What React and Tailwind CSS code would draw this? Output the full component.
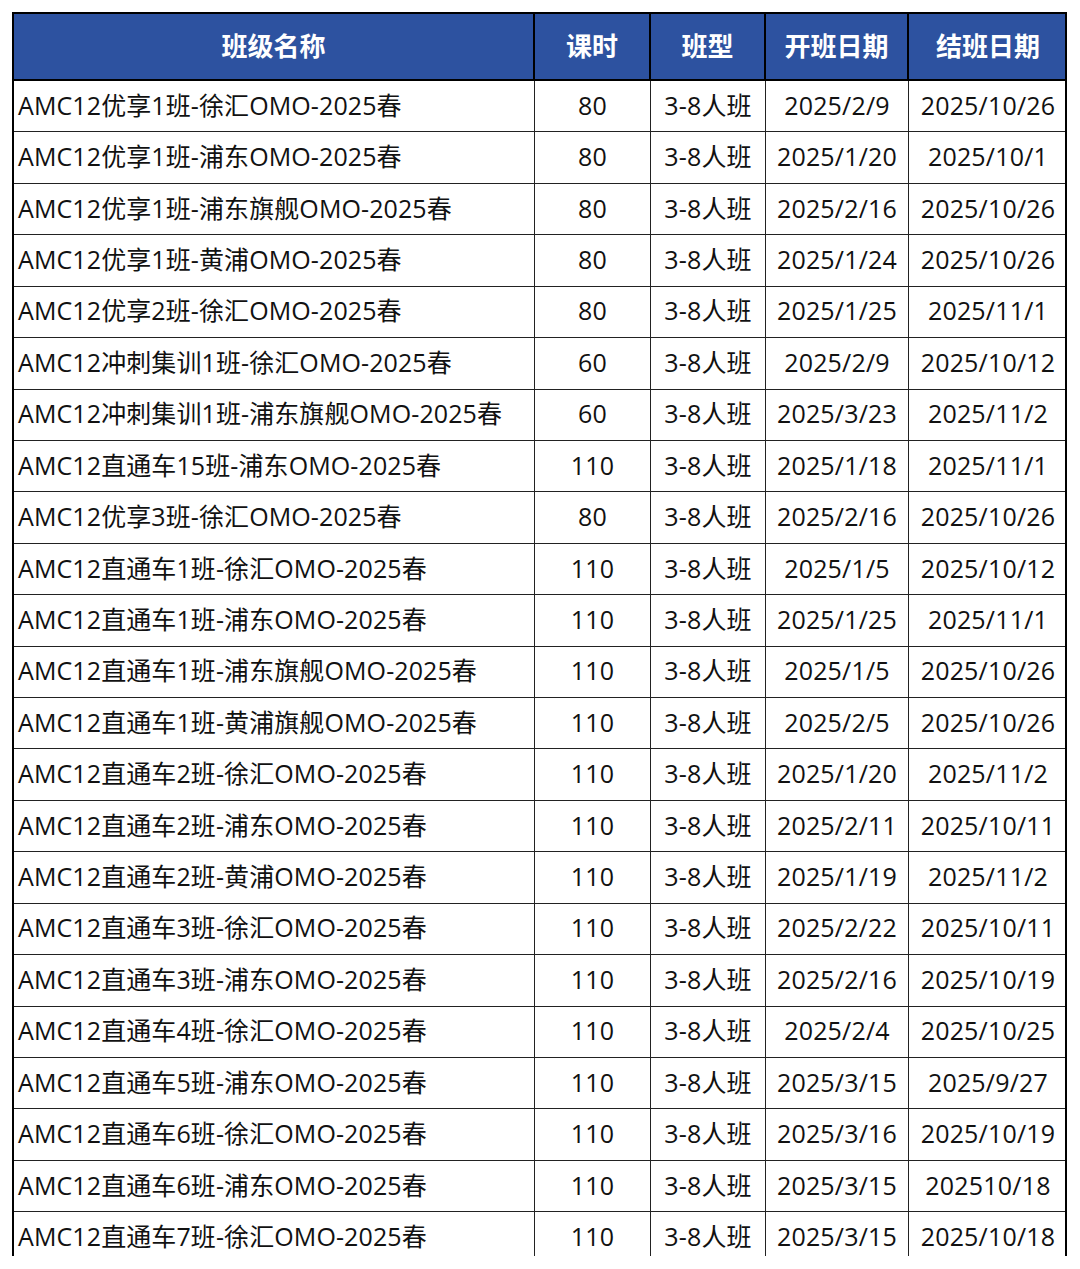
import React from "react";

const rows = [
  ["AMC12优享1班-徐汇OMO-2025春", "80", "3-8人班", "2025/2/9", "2025/10/26"],
  ["AMC12优享1班-浦东OMO-2025春", "80", "3-8人班", "2025/1/20", "2025/10/1"],
  ["AMC12优享1班-浦东旗舰OMO-2025春", "80", "3-8人班", "2025/2/16", "2025/10/26"],
  ["AMC12优享1班-黄浦OMO-2025春", "80", "3-8人班", "2025/1/24", "2025/10/26"],
  ["AMC12优享2班-徐汇OMO-2025春", "80", "3-8人班", "2025/1/25", "2025/11/1"],
  ["AMC12冲刺集训1班-徐汇OMO-2025春", "60", "3-8人班", "2025/2/9", "2025/10/12"],
  ["AMC12冲刺集训1班-浦东旗舰OMO-2025春", "60", "3-8人班", "2025/3/23", "2025/11/2"],
  ["AMC12直通车15班-浦东OMO-2025春", "110", "3-8人班", "2025/1/18", "2025/11/1"],
  ["AMC12优享3班-徐汇OMO-2025春", "80", "3-8人班", "2025/2/16", "2025/10/26"],
  ["AMC12直通车1班-徐汇OMO-2025春", "110", "3-8人班", "2025/1/5", "2025/10/12"],
  ["AMC12直通车1班-浦东OMO-2025春", "110", "3-8人班", "2025/1/25", "2025/11/1"],
  ["AMC12直通车1班-浦东旗舰OMO-2025春", "110", "3-8人班", "2025/1/5", "2025/10/26"],
  ["AMC12直通车1班-黄浦旗舰OMO-2025春", "110", "3-8人班", "2025/2/5", "2025/10/26"],
  ["AMC12直通车2班-徐汇OMO-2025春", "110", "3-8人班", "2025/1/20", "2025/11/2"],
  ["AMC12直通车2班-浦东OMO-2025春", "110", "3-8人班", "2025/2/11", "2025/10/11"],
  ["AMC12直通车2班-黄浦OMO-2025春", "110", "3-8人班", "2025/1/19", "2025/11/2"],
  ["AMC12直通车3班-徐汇OMO-2025春", "110", "3-8人班", "2025/2/22", "2025/10/11"],
  ["AMC12直通车3班-浦东OMO-2025春", "110", "3-8人班", "2025/2/16", "2025/10/19"],
  ["AMC12直通车4班-徐汇OMO-2025春", "110", "3-8人班", "2025/2/4", "2025/10/25"],
  ["AMC12直通车5班-浦东OMO-2025春", "110", "3-8人班", "2025/3/15", "2025/9/27"],
  ["AMC12直通车6班-徐汇OMO-2025春", "110", "3-8人班", "2025/3/16", "2025/10/19"],
  ["AMC12直通车6班-浦东OMO-2025春", "110", "3-8人班", "2025/3/15", "202510/18"],
  ["AMC12直通车7班-徐汇OMO-2025春", "110", "3-8人班", "2025/3/15", "2025/10/18"],
];

const headers = ["班级名称", "课时", "班型", "开班日期", "结班日期"];
const cols = "grid grid-cols-[521px_116px_115px_143px_158px]";

export default function App() {
  return (
    <div
      className="w-[1080px] h-[1269px] bg-white pt-[12px] pl-[12px]"
      style={{ fontFamily: '"Open Sans", "Noto Sans CJK SC", sans-serif' }}
    >
      <div className="w-[1055px] h-[1244px] overflow-hidden border-x-2 border-t-2 border-black">
        <div className={`${cols} h-[67px] bg-[#2d52a0] border-b-2 border-black`}>
          {headers.map((h, i) => (
            <div
              key={i}
              className={`flex items-center justify-center text-white font-bold text-[26px] leading-none pb-[2px] ${
                i < 4 ? "border-r-2 border-black" : ""
              }`}
            >
              {h}
            </div>
          ))}
        </div>
        {rows.map((r, ri) => (
          <div
            key={ri}
            className={`${cols} h-[51.43px] border-b-[1.5px] border-[#222]`}
          >
            {r.map((c, ci) => (
              <div
                key={ci}
                className={`flex items-center text-[25px] text-[#111] leading-none pb-[2px] whitespace-nowrap ${
                  ci === 0 ? "justify-start pl-[4px] tracking-[0.1px]" : "justify-center tracking-[0.2px]"
                } ${ci < 4 ? "border-r-[1.5px] border-[#222]" : ""}`}
              >
                {c}
              </div>
            ))}
          </div>
        ))}
      </div>
    </div>
  );
}
